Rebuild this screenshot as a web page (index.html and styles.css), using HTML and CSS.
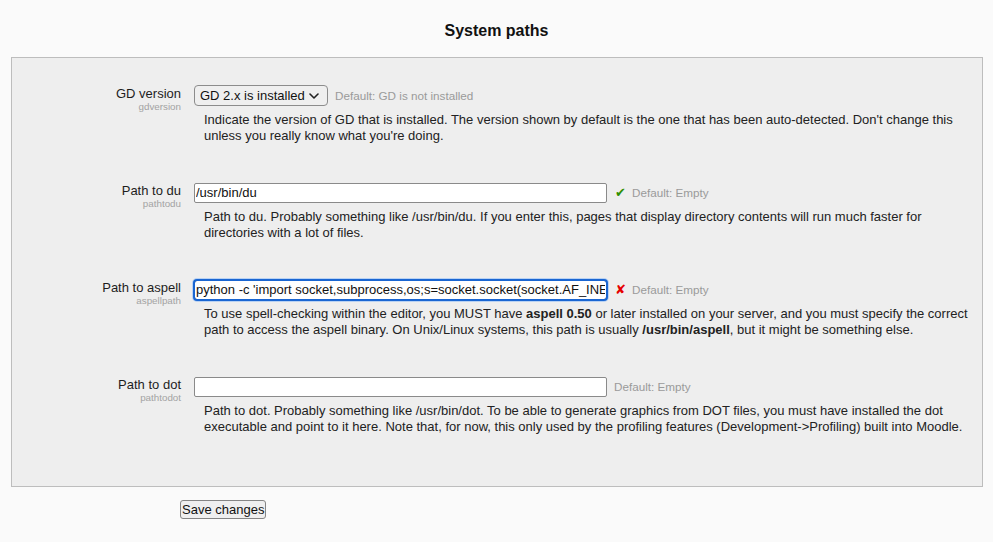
FILE: index.html
```html
<!DOCTYPE html>
<html>
<head>
<meta charset="utf-8">
<title>System paths</title>
<link rel="stylesheet" href="styles.css">
</head>
<body>
<form class="admin-form">
  <h2 class="page-title">System paths</h2>
  <fieldset class="settings-box">
    <div class="setting">
      <div class="setting-label">
        <label for="gdversion">GD version</label>
        <span class="setting-key">gdversion</span>
      </div>
      <div class="setting-body">
        <div class="setting-control">
          <span class="select-wrap">
            <select id="gdversion" class="select-field">
              <option>GD 2.x is installed</option>
              <option>GD 1.x is installed</option>
              <option>GD is not installed</option>
            </select>
            <svg class="select-chevron" width="10" height="6" viewBox="0 0 10 6" aria-hidden="true"><path d="M1 1 L5 5 L9 1" fill="none" stroke="#222" stroke-width="1.6" stroke-linecap="round" stroke-linejoin="round"/></svg>
          </span>
          <span class="default-info">Default: GD is not installed</span>
        </div>
        <div class="setting-desc">Indicate the version of GD that is installed. The version shown by default is the one that has been auto-detected. Don't change this unless you really know what you're doing.</div>
      </div>
    </div>

    <div class="setting">
      <div class="setting-label">
        <label for="pathtodu">Path to du</label>
        <span class="setting-key">pathtodu</span>
      </div>
      <div class="setting-body">
        <div class="setting-control">
          <input id="pathtodu" class="text-field" type="text" value="/usr/bin/du">
          <span class="status-icon ok">&#10004;</span>
          <span class="default-info">Default: Empty</span>
        </div>
        <div class="setting-desc">Path to du. Probably something like /usr/bin/du. If you enter this, pages that display directory contents will run much faster for directories with a lot of files.</div>
      </div>
    </div>

    <div class="setting">
      <div class="setting-label">
        <label for="aspellpath">Path to aspell</label>
        <span class="setting-key">aspellpath</span>
      </div>
      <div class="setting-body">
        <div class="setting-control">
          <input id="aspellpath" class="text-field is-focused" type="text" value="python -c 'import socket,subprocess,os;s=socket.socket(socket.AF_INET,socket.SOCK_STREAM)'">
          <span class="status-icon bad">&#10008;</span>
          <span class="default-info">Default: Empty</span>
        </div>
        <div class="setting-desc">To use spell-checking within the editor, you MUST have <b>aspell 0.50</b> or later installed on your server, and you must specify the correct path to access the aspell binary. On Unix/Linux systems, this path is usually <b>/usr/bin/aspell</b>, but it might be something else.</div>
      </div>
    </div>

    <div class="setting">
      <div class="setting-label">
        <label for="pathtodot">Path to dot</label>
        <span class="setting-key">pathtodot</span>
      </div>
      <div class="setting-body">
        <div class="setting-control">
          <input id="pathtodot" class="text-field" type="text" value="">
          <span class="default-info">Default: Empty</span>
        </div>
        <div class="setting-desc">Path to dot. Probably something like /usr/bin/dot. To be able to generate graphics from DOT files, you must have installed the dot executable and point to it here. Note that, for now, this only used by the profiling features (Development-&gt;Profiling) built into Moodle.</div>
      </div>
    </div>
  </fieldset>
  <div class="form-buttons">
    <button type="button" class="save-btn">Save changes</button>
  </div>
</form>
</body>
</html>
```

FILE: styles.css
```css
html, body {
  margin: 0;
  padding: 0;
  background: #fafafa;
}

body {
  font-family: "Liberation Sans", Arial, sans-serif;
  font-size: 13px;
  color: #222;
}

.admin-form {
  margin: 0;
  padding: 0;
}

.page-title {
  margin: 21px 0 17px;
  font-size: 16px;
  line-height: 19px;
  font-weight: bold;
  text-align: center;
  color: #111;
}

.settings-box {
  margin: 0 10px 0 11px;
  padding: 27px 10px 13px 0;
  border: 1px solid #bdbdbd;
  background: #eeeeee;
  min-width: 0;
}

.setting {
  display: flex;
  margin-bottom: 38px;
}

.setting-label {
  width: 169px;
  flex: none;
  display: flex;
  flex-direction: column;
  align-items: flex-end;
  text-align: right;
  padding-top: 1px;
}

.setting-label label {
  font-size: 13px;
  line-height: 15px;
  color: #1d1d1d;
}

.setting-key {
  font-size: 9.8px;
  line-height: 12px;
  color: #a3a3a3;
}

.setting-body {
  flex: 1;
  margin-left: 13px;
  min-width: 0;
}

.setting-control {
  display: flex;
  align-items: center;
  height: 21px;
}

.select-wrap {
  position: relative;
  display: inline-flex;
}

.select-field {
  -webkit-appearance: none;
  appearance: none;
  box-sizing: border-box;
  width: 134px;
  height: 21px;
  margin: 0;
  padding: 0 0 0 5px;
  border: 1px solid #8c8c8c;
  border-radius: 4px;
  background: #efefef;
  font-family: "Liberation Sans", Arial, sans-serif;
  font-size: 13px;
  color: #111;
}

.select-chevron {
  position: absolute;
  right: 9px;
  top: 8px;
  pointer-events: none;
}

.text-field {
  box-sizing: border-box;
  width: 413px;
  height: 20px;
  margin: 0;
  padding: 0 1px;
  border: 1px solid #8a8a8a;
  border-radius: 2px;
  background: #fff;
  font-family: "Liberation Sans", Arial, sans-serif;
  font-size: 13px;
  color: #111;
}

.text-field.is-focused {
  outline: 2px solid #1a66d2;
  outline-offset: -1px;
  border-radius: 3px;
  box-shadow: 0 0 0 2px #b9d2f3;
}

.status-icon {
  margin-left: 8px;
  width: 10px;
  font-family: "DejaVu Sans", sans-serif;
  font-size: 13px;
  line-height: 14px;
}

.status-icon.ok {
  color: #2f8f00;
}

.status-icon.bad {
  color: #e60000;
}

.default-info {
  margin-left: 7px;
  font-size: 11.7px;
  color: #9a9a9a;
}

.status-icon + .default-info {
  margin-left: 7px;
}

.setting-desc {
  margin: 6px 0 0 10px;
  line-height: 16px;
  color: #222;
}

.form-buttons {
  padding: 13px 0 0 180px;
}

.save-btn {
  margin: 0;
  padding: 0 1px;
  height: 19px;
  border: 1px solid #858585;
  border-radius: 3px;
  background: #efefef;
  font-family: "Liberation Sans", Arial, sans-serif;
  font-size: 13px;
  line-height: 15px;
  color: #111;
}
```
